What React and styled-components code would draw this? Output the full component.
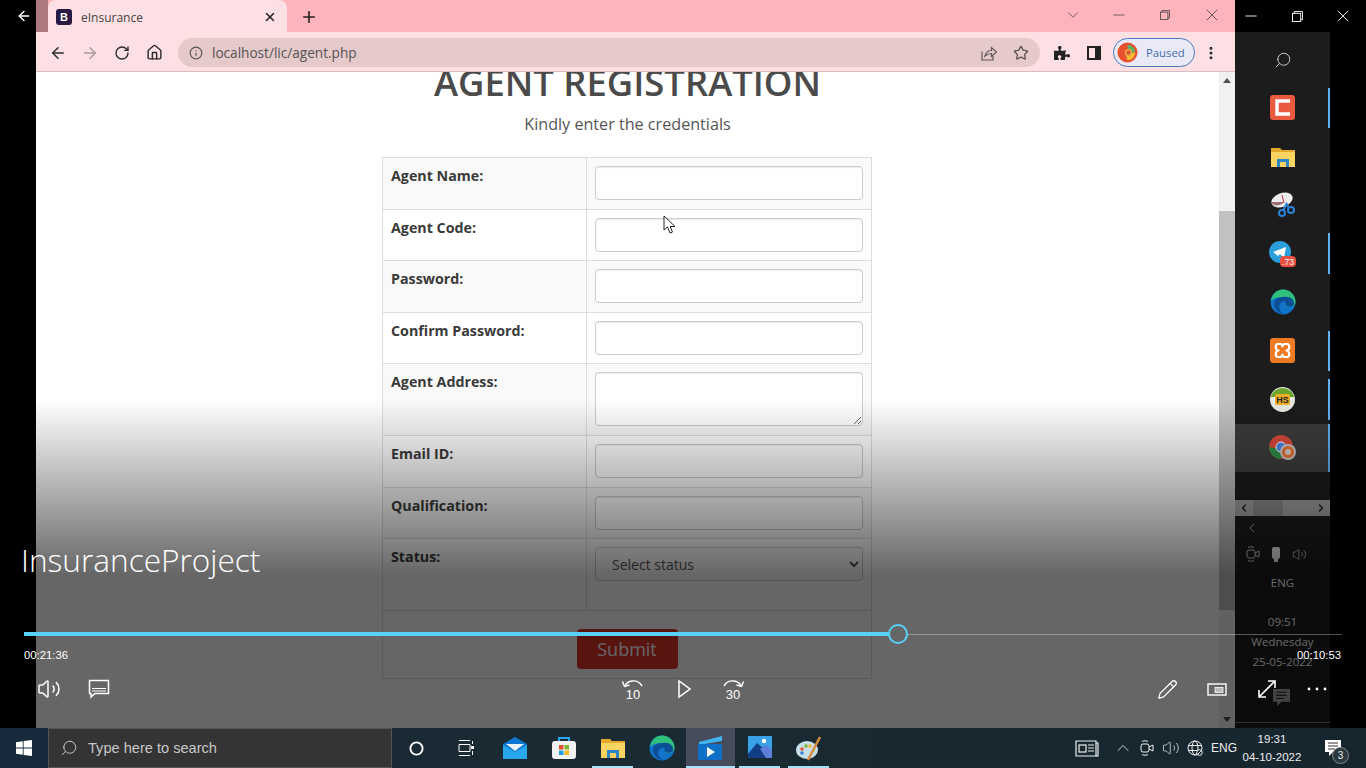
import React from 'react';
import styled, { createGlobalStyle } from 'styled-components';
import { ArrowLeft, ArrowRight, RotateCw, Home, Info, Star, ChevronDown, ChevronUp, ChevronLeft, ChevronRight, Minus, X, Plus, Search, Volume2, Pencil, MoreVertical } from 'lucide-react';
import { FaPuzzlePiece } from 'react-icons/fa';

const GlobalStyle = createGlobalStyle`
  html, body { margin: 0; padding: 0; background: #000; }
  * { box-sizing: border-box; }
  body { font-family: "Open Sans", "Liberation Sans", sans-serif; overflow: hidden; }
`;

const Desktop = styled.div`
  position: relative;
  width: 1366px;
  height: 768px;
  display: flex;
  flex-direction: column;
  overflow: hidden;
  background: #000;
`;

const Stage = styled.div`
  flex: 1;
  display: flex;
  min-height: 0;
`;

const LeftGutter = styled.div`
  width: 36px;
  background: #000;
  color: #fff;
  padding: 7px 0 0 16px;
`;

const Browser = styled.div`
  width: 1199px;
  display: flex;
  flex-direction: column;
`;

const TabStrip = styled.div`
  height: 32px;
  display: flex;
  align-items: flex-end;
  background: #ffb3ba;
  color: #333;
`;

const TabEdge = styled.div`
  width: 12px;
  height: 32px;
  background: #ad7a80;
`;

const Tab = styled.div`
  width: 239px;
  height: 32px;
  display: flex;
  align-items: center;
  padding: 2px 10px 0 8px;
  background: #fde0e3;
  border-radius: 8px 8px 0 0;
  font-size: 12px;
  color: #444;
`;

const Favicon = styled.div`
  width: 16px;
  height: 16px;
  border-radius: 3px;
  background: #2a1845;
  color: #fff;
  font: bold 11px/16px "Liberation Sans", sans-serif;
  text-align: center;
  margin-right: 9px;
`;

const TabTitle = styled.span`
  flex: 1;
`;

const NewTab = styled.div`
  width: 44px;
  height: 32px;
  padding-top: 2px;
  display: flex;
  align-items: center;
  justify-content: center;
  color: #222;
`;

const WindowControls = styled.div`
  margin-left: auto;
  display: flex;
  height: 30px;
  align-self: flex-start;
  align-items: center;
  color: #444;
`;

const WindowButton = styled.div`
  width: 46.4px;
  flex-shrink: 0;
  display: flex;
  justify-content: center;
  align-items: center;
`;

const Toolbar = styled.div`
  height: 40px;
  display: flex;
  align-items: center;
  background: #fde0e3;
  border-bottom: 1px solid #dcbcbf;
  padding: 2px 0 0 6px;
`;

const NavButton = styled.div`
  width: 32px;
  height: 32px;
  flex-shrink: 0;
  display: flex;
  align-items: center;
  justify-content: center;
  color: ${p => (p.$disabled ? '#a99a9c' : '#2b2b2b')};
`;

const Omnibox = styled.div`
  width: 862px;
  height: 29px;
  margin-left: 8px;
  margin-right: 6px;
  border-radius: 15px;
  background: #e6c9cb;
  display: flex;
  align-items: center;
  padding: 0 3px 0 11px;
  color: #555;
  font-size: 13.6px;
`;

const Url = styled.span`
  flex: 1;
  margin-left: 9px;
  color: #555;
`;

const OmniIcon = styled.div`
  width: 32px;
  display: flex;
  justify-content: center;
  color: #5d5556;
`;

const ProfileChip = styled.div`
  width: 82px;
  height: 29px;
  flex-shrink: 0;
  margin-left: 3px;
  border: 1.5px solid #4a78c0;
  border-radius: 15px;
  background: #e9eaf5;
  display: flex;
  align-items: center;
  padding-left: 3px;
  gap: 8px;
  font-size: 11.3px;
  color: #3f6cae;
`;

const BrowserBody = styled.div`
  flex: 1;
  display: flex;
  min-height: 0;
  background: #fff;
`;

const Viewport = styled.div`
  position: relative;
  flex: 1;
  overflow: hidden;
  display: flex;
  flex-direction: column;
  align-items: center;
`;

const Heading = styled.h1`
  margin: -10px 0 0;
  font-size: 36.4px;
  line-height: 40px;
  font-weight: 600;
  color: #4a4a4a;
  white-space: nowrap;
`;

const Subheading = styled.p`
  margin: 10px 0 21px;
  font-size: 16.15px;
  line-height: 24px;
  color: #555;
`;

const FormTable = styled.table`
  width: 489px;
  margin-right: 1px;
  border-collapse: collapse;
  border: 1px solid #ddd;
  table-layout: fixed;
`;

const Row = styled.tr`
  background: ${p => (p.$striped ? '#f9f9f9' : '#fff')};
`;

const LabelCell = styled.th`
  padding: 8px;
  border: 1px solid #ddd;
  text-align: left;
  vertical-align: top;
  font-size: 14.25px;
  line-height: 20px;
  font-weight: 700;
  color: #3a3a3a;
`;

const FieldCell = styled.td`
  padding: 8px;
  border: 1px solid #ddd;
  vertical-align: top;
  height: ${p => p.$height};
`;

const SubmitCell = styled.td`
  height: 68px;
  padding: 18px 0 0;
  border: 1px solid #ddd;
  text-align: center;
  vertical-align: top;
`;

const TextInput = styled.input`
  display: block;
  width: 268px;
  height: 34px;
  padding: 6px 12px;
  border: 1px solid #ccc;
  border-radius: 4px;
  background: #fff;
  box-shadow: inset 0 1px 1px rgba(0, 0, 0, 0.075);
`;

const TextArea = styled.textarea`
  display: block;
  width: 268px;
  height: 54px;
  padding: 6px 12px;
  border: 1px solid #ccc;
  border-radius: 4px;
  background: #fff;
  box-shadow: inset 0 1px 1px rgba(0, 0, 0, 0.075);
`;

const StatusSelect = styled.select`
  display: block;
  width: 268px;
  height: 34px;
  padding: 6px 12px;
  border: 1px solid #ccc;
  border-radius: 4px;
  background: #fff;
  color: #555;
  font-family: "Open Sans", sans-serif;
  font-size: 14px;
`;

const SubmitButton = styled.button`
  width: 101px;
  height: 40px;
  border: none;
  border-radius: 4px;
  background: #dc3226;
  color: #fff;
  font-family: "Open Sans", sans-serif;
  font-size: 18px;
`;

const MouseCursor = styled.svg`
  position: absolute;
  left: 627px;
  top: 143px;
`;

const Scrollbar = styled.div`
  width: 16px;
  background: #f1f1f1;
  display: flex;
  flex-direction: column;
  align-items: stretch;
`;

const ScrollArrow = styled.div`
  height: 17px;
  display: flex;
  align-items: center;
  justify-content: center;
`;

const ScrollSpacer = styled.div`
  height: ${p => p.$height || 'auto'};
  flex: ${p => (p.$height ? 'none' : 1)};
`;

const ScrollThumb = styled.div`
  height: 399px;
  background: #c1c1c1;
`;

const RightColumn = styled.div`
  width: 131px;
  display: flex;
  flex-direction: column;
`;

const BlackBar = styled.div`
  height: 32px;
  display: flex;
  justify-content: flex-end;
  align-items: center;
  color: #fff;
  background: #000;
`;

const BlackButton = styled.div`
  width: 46px;
  flex-shrink: 0;
  display: flex;
  justify-content: center;
`;

const Dock = styled.div`
  position: relative;
  width: 95px;
  flex: 1;
  background: #1c1c1c;
  display: flex;
  flex-direction: column;
  align-items: stretch;
  color: #aaa;
`;

const DockSearch = styled.div`
  height: 51.7px;
  padding-top: 4px;
  display: flex;
  align-items: center;
  justify-content: center;
  color: #ccc;
`;

const DockItem = styled.div`
  position: relative;
  height: 48.6px;
  display: flex;
  align-items: center;
  justify-content: center;
  background: ${p => (p.$active ? '#3c3c3c' : 'transparent')};
  ${p => p.$running && `
    &::after {
      content: "";
      position: absolute;
      right: 0;
      top: ${p.$active ? 0 : '4px'};
      bottom: ${p.$active ? 0 : '4px'};
      width: 2px;
      background: #5eb2f5;
    }
  `}
`;

const DockScroll = styled.div`
  height: 16px;
  margin-top: 28px;
  display: flex;
  justify-content: space-between;
  align-items: center;
  background: #a4a4a4;
  color: #222;
  padding: 0 3px;
`;

const DockThumb = styled.div`
  width: 30px;
  height: 16px;
  margin-right: 30px;
  background: #8e8e8e;
`;

const DockInfo = styled.div`
  display: flex;
  flex-direction: column;
  align-items: center;
  font-size: 11.5px;
  color: #fff;
  padding-top: 4px;
`;

const DockBack = styled.div`
  align-self: flex-start;
  margin-left: 9px;
  height: 18px;
  color: #eee;
`;

const DockIcons = styled.div`
  display: flex;
  align-self: flex-start;
  margin: 5px 0 0 11px;
  gap: 11px;
  align-items: center;
  height: 22px;
`;

const DockLine = styled.div`
  margin-top: ${p => p.$top || 0};
  line-height: 18px;
`;

const DockComment = styled.div`
  position: absolute;
  left: 38px;
  top: 657px;
  opacity: 0.6;
`;

const DockRule = styled.div`
  position: absolute;
  left: 0;
  right: 0;
  top: 690px;
  height: 1px;
  background: #777;
`;

const Player = styled.div`
  position: absolute;
  left: 0;
  right: 0;
  top: 0;
  bottom: 40px;
  display: flex;
  flex-direction: column;
  justify-content: flex-end;
  background: linear-gradient(
    to bottom,
    rgba(0, 0, 0, 0) 400px,
    rgba(0, 0, 0, 0.6) 575px
  );
  color: #fff;
`;

const VideoTitle = styled.div`
  margin: 0 0 43px 21px;
  font-size: 31.6px;
  line-height: 44px;
  font-weight: 300;
  font-family: "Open Sans", "Noto Sans", sans-serif;
`;

const Progress = styled.div`
  position: relative;
  height: 18px;
  margin: 0 24px;
  display: flex;
  align-items: center;
`;

const ProgressFill = styled.div`
  height: 4px;
  background: #5bd0f8;
`;

const ProgressRest = styled.div`
  flex: 1;
  height: 1px;
  background: rgba(255, 255, 255, 0.32);
`;

const ProgressThumb = styled.div`
  width: 20px;
  height: 20px;
  margin: 0 -1px 0 -10px;
  border: 2px solid #5bd0f8;
  border-radius: 50%;
  background: #666;
  position: relative;
`;

const TimeRow = styled.div`
  height: 21px;
  display: flex;
  justify-content: space-between;
  align-items: center;
  padding: 2px 25px 0 24px;
  font-family: "Liberation Sans", sans-serif;
  font-size: 11.3px;
`;

const ControlRow = styled.div`
  display: grid;
  grid-template-columns: 1fr auto 1fr;
  padding: 0 24px 14px;
`;

const ControlGroup = styled.div`
  display: flex;
  justify-content: ${p => p.$justify || 'flex-start'};
`;

const ControlButton = styled.div`
  width: 50px;
  height: 50px;
  display: flex;
  align-items: center;
  justify-content: center;
  color: #fff;
`;

const Taskbar = styled.div`
  height: 40px;
  display: flex;
  align-items: center;
  background: linear-gradient(90deg, #16283a 0%, #1a2b33 40%, #16262f 100%);
  color: #fff;
  position: relative;
`;

const StartButton = styled.div`
  width: 48px;
  height: 40px;
  display: flex;
  align-items: center;
  justify-content: center;
`;

const SearchBox = styled.div`
  width: 344px;
  height: 40px;
  display: flex;
  align-items: center;
  gap: 10px;
  padding-left: 11px;
  background: #343434;
  border: 1px solid #555;
  color: #c8c8c8;
  font-family: "Liberation Sans", "Open Sans", sans-serif;
  font-size: 14.6px;
`;

const TaskSlot = styled.div`
  position: relative;
  width: 49px;
  height: 40px;
  display: flex;
  align-items: center;
  justify-content: center;
  background: ${p => (p.$active ? '#474c5c' : 'transparent')};
  ${p => p.$running && `
    &::after {
      content: "";
      position: absolute;
      left: ${p.$active ? 0 : '4px'};
      right: ${p.$active ? 0 : '4px'};
      bottom: 0;
      height: 2px;
      background: #a5e1f8;
    }
  `}
`;

const Tray = styled.div`
  margin-left: auto;
  display: flex;
  align-items: center;
  height: 40px;
  padding-right: 9px;
  color: #eee;
`;

const TrayIcon = styled.div`
  width: ${p => p.$width || '24px'};
  display: flex;
  justify-content: center;
`;

const TrayText = styled.div`
  font-family: "Liberation Sans", sans-serif;
  font-size: 12px;
  width: 26px;
  margin-left: 4px;
  text-align: center;
`;

const Clock = styled.div`
  width: 70px;
  text-align: center;
  font-family: "Liberation Sans", sans-serif;
  font-size: 11.5px;
  line-height: 18px;
`;

const NotifyWrap = styled.div`
  position: relative;
  width: 48px;
  margin-left: 2px;
  height: 40px;
  display: flex;
  align-items: center;
  justify-content: center;
`;

const NotifyBadge = styled.div`
  position: absolute;
  left: 23px;
  top: 19px;
  width: 17px;
  height: 17px;
  border-radius: 50%;
  border: 1px solid #888;
  background: #2a3840;
  font-size: 10px;
  line-height: 15px;
  text-align: center;
  font-family: "Liberation Sans", sans-serif;
`;

const MirroredSearch = styled(Search)`
  transform: scaleX(-1);
`;

/* drawn icons */
const RestoreIcon = ({ size = 12, color = 'currentColor' }) => (
  <svg width={size} height={size} viewBox="0 0 12 12" fill="none" stroke={color} strokeWidth="1">
    <rect x="0.5" y="2.5" width="9" height="9" />
    <path d="M2.5 2.5V0.5H11.5V9.5H9.5" />
  </svg>
);

const ShareIcon = () => (
  <svg width="16" height="16" viewBox="0 0 16 16" fill="none" stroke="currentColor" strokeWidth="1.2">
    <path d="M1 6.5V15H12V11" />
    <path d="M4 11C5 7 8 5.5 10.5 5.5V2.5L15.5 7L10.5 11.5V8.5C8 8.5 6 9.3 4 11Z" />
  </svg>
);

const SidePanelIcon = () => (
  <svg width="14" height="14" viewBox="0 0 14 14">
    <rect x="1" y="1" width="12" height="12" fill="#fde0e3" stroke="#222" strokeWidth="2" />
    <rect x="8" y="1" width="5" height="12" fill="#222" />
  </svg>
);

const ChromeBall = ({ size = 21 }) => (
  <svg width={size} height={size} viewBox="0 0 22 22">
    <circle cx="11" cy="11" r="10.5" fill="#e8502e" />
    <path d="M11 3A8 8 0 0 1 19 11H12Z" fill="#58b368" />
    <path d="M19 11A8 8 0 0 1 11 19L9 13Z" fill="#f5c02e" />
    <circle cx="12" cy="11" r="4" fill="#e9a13a" />
    <circle cx="12" cy="11" r="2" fill="#d94a3a" />
  </svg>
);

const EdgeIcon = ({ size = 26 }) => (
  <svg width={size} height={size} viewBox="0 0 26 26">
    <circle cx="13" cy="13" r="12.5" fill="#1173c9" />
    <path d="M1 12C2 5 7 .5 13 .5C20 .5 25.5 6 25.5 13C25.5 16 23 18 20 18C17 18 15.5 17 15 15.5C18 15 18.5 12 16 10C12 7 4 8 1 12Z" fill="#2fc07c" />
    <path d="M13 8C8 8 4 11 4 15C4 20 9 25 14 25C8 22 8 15 12 13C15 11.5 17 13 15 15.5C17 18 21 19 24 16C25 10 20 7 13 8Z" fill="#0c4f97" />
  </svg>
);

const FolderIcon = ({ size = 26 }) => (
  <svg width={size} height={size} viewBox="0 0 26 24">
    <path d="M1 3H10L12 5H25V21H1Z" fill="#e3a92c" />
    <rect x="1" y="7" width="24" height="15" fill="#fbd461" />
    <rect x="7" y="14" width="12" height="8" fill="#2b86c9" />
    <rect x="10" y="17" width="6" height="5" fill="#fbd461" />
  </svg>
);

const CamtasiaIcon = () => (
  <svg width="25" height="25" viewBox="0 0 25 25">
    <rect width="25" height="25" rx="3" fill="#ea5a3e" />
    <path d="M20 6H7V19H20" fill="none" stroke="#fff" strokeWidth="3.5" />
  </svg>
);

const SnipIcon = () => (
  <svg width="26" height="28" viewBox="0 0 26 28" fill="none">
    <ellipse cx="12" cy="9" rx="11" ry="7" fill="#eee" transform="rotate(-20 12 9)" />
    <path d="M1 11C3 16 11 15 14 11" fill="#996c6f" />
    <path d="M12 4L14 12" stroke="#b34" strokeWidth="1" />
    <circle cx="12" cy="22" r="3" stroke="#2b83d8" strokeWidth="2" />
    <circle cx="21" cy="19" r="3" stroke="#2b83d8" strokeWidth="2" />
    <path d="M13 20L17 12M19 17L16 12" stroke="#2b83d8" strokeWidth="2" />
  </svg>
);

const TelegramIcon = () => (
  <svg width="28" height="26" viewBox="0 0 28 26">
    <circle cx="11" cy="11" r="11" fill="#2a9fdc" />
    <path d="M4 11L17 6L15 17L11 13L9 15Z" fill="#fff" />
    <rect x="11" y="15" width="16" height="11" rx="4" fill="#e8503f" />
    <text x="19" y="24" fill="#fff" fontSize="8.5" textAnchor="middle" fontFamily="Liberation Sans">.73</text>
  </svg>
);

const XamppIcon = () => (
  <svg width="25" height="25" viewBox="0 0 25 25">
    <rect width="25" height="25" rx="3" fill="#ee7b23" />
    <path d="M8 6H11L12.5 8L14 6H17C20 6 20 11 17 12.5C20 14 20 19 17 19H14L12.5 17L11 19H8C5 19 5 14 8 12.5C5 11 5 6 8 6Z" fill="none" stroke="#fff" strokeWidth="2.2" />
  </svg>
);

const HsIcon = () => (
  <svg width="25" height="25" viewBox="0 0 25 25">
    <circle cx="12.5" cy="12.5" r="12.5" fill="#e8e8e2" />
    <path d="M.5 10A12.5 12.5 0 0 1 24.5 10Z" fill="#6aa62e" />
    <rect x="5" y="7" width="15" height="11" rx="2" fill="#f1ae24" />
    <text x="12.5" y="16" fontSize="9" fontWeight="700" textAnchor="middle" fontFamily="Liberation Sans" fill="#222">HS</text>
  </svg>
);

const ChromeOverlapIcon = () => (
  <svg width="28" height="26" viewBox="0 0 28 26">
    <circle cx="12" cy="12" r="12" fill="#d94a3a" />
    <path d="M0 12A12 12 0 0 0 12 24L15 15Z" fill="#2f8f4a" />
    <circle cx="12" cy="12" r="5" fill="#4a86e8" stroke="#fff" strokeWidth="1" />
    <circle cx="19" cy="17" r="8" fill="#c8c8c8" />
    <circle cx="19" cy="17" r="6" fill="#e8702e" />
    <circle cx="19" cy="17" r="3" fill="#d5d0c8" />
  </svg>
);

const MailIcon = () => (
  <svg width="24" height="24" viewBox="0 0 24 24">
    <path d="M0 8L12 1L24 8V23H0Z" fill="#0f78d4" />
    <path d="M3 8H21L12 15Z" fill="#e8f3fb" />
    <path d="M0 9L12 16L24 9V23H0Z" fill="#27a6ec" />
  </svg>
);

const StoreIcon = () => (
  <svg width="24" height="24" viewBox="0 0 24 24">
    <path d="M7 5V2H17V5" fill="none" stroke="#2aa3e8" strokeWidth="2" />
    <rect y="5" width="24" height="18" rx="3" fill="#f2f2f2" />
    <rect x="7" y="9" width="4.5" height="4.5" fill="#e8502e" />
    <rect x="12.5" y="9" width="4.5" height="4.5" fill="#7fb62d" />
    <rect x="7" y="14.5" width="4.5" height="4.5" fill="#1f9be0" />
    <rect x="12.5" y="14.5" width="4.5" height="4.5" fill="#f5b921" />
  </svg>
);

const MoviesIcon = () => (
  <svg width="25" height="24" viewBox="0 0 25 24">
    <path d="M1 6L24 0V5L1 9Z" fill="#41b4ee" />
    <rect x="0" y="8" width="24" height="16" rx="2" fill="#0f6fc4" />
    <path d="M9 11L17 16L9 21Z" fill="#fff" />
  </svg>
);

const PhotosIcon = () => (
  <svg width="24" height="24" viewBox="0 0 24 24">
    <rect width="24" height="22" fill="#3aa0e8" />
    <circle cx="16" cy="5" r="2.2" fill="#fff" />
    <path d="M0 18L9 7L24 20V22H0Z" fill="#123f84" />
    <path d="M12 13L18 9L24 14V22H18Z" fill="#5b7fdb" />
  </svg>
);

const PaintIcon = () => (
  <svg width="26" height="26" viewBox="0 0 26 26">
    <ellipse cx="11" cy="15" rx="11" ry="9" fill="#c6dfe8" />
    <circle cx="6" cy="14" r="1.7" fill="#e8502e" />
    <circle cx="10" cy="11" r="1.7" fill="#7fb62d" />
    <circle cx="14" cy="11" r="1.7" fill="#f5b921" />
    <circle cx="6" cy="18" r="1.7" fill="#2a7de1" />
    <path d="M12 25L24 2" stroke="#d88b3d" strokeWidth="2.5" />
  </svg>
);

const WindowsLogo = () => (
  <svg width="16" height="16" viewBox="0 0 16 16" fill="#fff">
    <path d="M0 2.3L6.8 1.2V7.6H0ZM7.6 1.1L16 0V7.6H7.6ZM0 8.4H6.8V14.8L0 13.7ZM7.6 8.4H16V16L7.6 14.9Z" />
  </svg>
);

const CaptionIcon = () => (
  <svg width="22" height="20" viewBox="0 0 22 20" fill="none" stroke="#fff" strokeWidth="1.5">
    <path d="M1.5 1.5H20.5V14.5H7L3 18V14.5H1.5Z" />
    <path d="M4 9.5H18M4 12H18" strokeWidth="1" />
  </svg>
);

const RewindIcon = ({ label, flip }) => (
  <svg width="24" height="24" viewBox="0 0 24 24" fill="none" stroke="#fff" strokeWidth="1.4">
    <g transform={flip ? 'translate(24 0) scale(-1 1)' : undefined}>
      <path d="M4 9C6 3 16 2 20 7.5L21 9" />
      <path d="M1.5 4.5L3.5 9.5L8.5 8" />
    </g>
    <text x="12" y="22" fill="#fff" stroke="none" fontSize="13" textAnchor="middle" fontFamily="Liberation Sans">{label}</text>
  </svg>
);

const PlayIcon = () => (
  <svg width="16" height="20" viewBox="0 0 16 20" fill="none" stroke="#fff" strokeWidth="1.5">
    <path d="M4 2V18L15 10Z" />
  </svg>
);

const PipIcon = () => (
  <svg width="20" height="13" viewBox="0 0 20 13" fill="none" stroke="#fff" strokeWidth="1.4">
    <rect x="1" y="1" width="18" height="11" />
    <rect x="8" y="4.5" width="8" height="5" fill="#bbb" strokeWidth="0.8" />
  </svg>
);

const ExpandIcon = () => (
  <svg width="20" height="20" viewBox="0 0 20 20" fill="none" stroke="#fff" strokeWidth="1.6">
    <path d="M2 18L18 2M11 2H18V9M2 11V18H9" />
  </svg>
);

const Dots = () => (
  <svg width="20" height="4" viewBox="0 0 20 4" fill="#fff">
    <circle cx="2" cy="2" r="1.4" />
    <circle cx="10" cy="2" r="1.4" />
    <circle cx="18" cy="2" r="1.4" />
  </svg>
);

const MeetIcon = ({ color = '#eee' }) => (
  <svg width="14" height="16" viewBox="0 0 14 16" fill="none" stroke={color} strokeWidth="1">
    <rect x="1" y="4" width="8" height="8" rx="2" />
    <path d="M9 7L13 5V11L9 9" />
    <path d="M2 1.5C4 .5 6 .5 8 1.5M2 14.5C4 15.5 6 15.5 8 14.5" />
  </svg>
);

const NewsIcon = () => (
  <svg width="24" height="17" viewBox="0 0 24 17" fill="none" stroke="#eee" strokeWidth="1.2">
    <path d="M1 1H21V16H1Z" />
    <path d="M21 3H23V16H21" />
    <rect x="4" y="5" width="7" height="7" />
    <path d="M13 5H19M13 8H19M13 11H19" />
  </svg>
);

const GlobeIcon = () => (
  <svg width="16" height="16" viewBox="0 0 16 16" fill="none" stroke="#eee" strokeWidth="1">
    <circle cx="8" cy="8" r="7" />
    <ellipse cx="8" cy="8" rx="3" ry="7" />
    <path d="M1 5.5H15M1 10.5H15" />
    <circle cx="12.5" cy="12.5" r="2.8" fill="#1a2b33" />
    <path d="M10.7 14.3L14.3 10.7" />
  </svg>
);

const SpeechIcon = ({ color = '#fff', size = 16 }) => (
  <svg width={size} height={size} viewBox="0 0 16 16" fill={color}>
    <path d="M0 0H16V12H8L4 16V12H0Z" />
    <path d="M3 3H13M3 6H13M3 9H10" stroke="#333" strokeWidth="1" />
  </svg>
);

const CursorIcon = () => (
  <MouseCursor width="14" height="20" viewBox="0 0 14 20">
    <path d="M1 1V15L4.5 12L7 18L9.5 17L7 11.5H12Z" fill="#fff" stroke="#222" strokeWidth="1" />
  </MouseCursor>
);

// row heights alternate 52/51 in the reference
const fields = [
  { label: 'Agent Name:', height: '52px', striped: true, control: <TextInput /> },
  { label: 'Agent Code:', height: '51px', control: <TextInput /> },
  { label: 'Password:', height: '52px', striped: true, control: <TextInput /> },
  { label: 'Confirm Password:', height: '51px', control: <TextInput /> },
  { label: 'Agent Address:', height: '72px', striped: true, control: <TextArea /> },
  { label: 'Email ID:', height: '52px', control: <TextInput /> },
  { label: 'Qualification:', height: '51px', striped: true, control: <TextInput /> },
  {
    label: 'Status:',
    height: '72px',
    control: (
      <StatusSelect defaultValue="">
        <option value="">Select status</option>
      </StatusSelect>
    ),
  },
];

const dockApps = [
  { icon: <CamtasiaIcon />, running: true },
  { icon: <FolderIcon /> },
  { icon: <SnipIcon /> },
  { icon: <TelegramIcon />, running: true },
  { icon: <EdgeIcon /> },
  { icon: <XamppIcon />, running: true },
  { icon: <HsIcon />, running: true },
  { icon: <ChromeOverlapIcon />, running: true, active: true },
];

const taskApps = [
  { icon: <MailIcon /> },
  { icon: <StoreIcon /> },
  { icon: <FolderIcon />, running: true },
  { icon: <EdgeIcon /> },
  { icon: <MoviesIcon />, running: true, active: true },
  { icon: <PhotosIcon />, running: true },
  { icon: <PaintIcon />, running: true },
];

const progress = (874 / 1318) * 100;

const App = () => (
  <Desktop>
    <GlobalStyle />
    <Stage>
      <LeftGutter>
        <ArrowLeft size={16} strokeWidth={2} />
      </LeftGutter>
      <Browser>
        <TabStrip>
          <TabEdge />
          <Tab>
            <Favicon>B</Favicon>
            <TabTitle>eInsurance</TabTitle>
            <X size={14} strokeWidth={2.5} color="#222" />
          </Tab>
          <NewTab>
            <Plus size={18} strokeWidth={2.2} />
          </NewTab>
          <WindowControls>
            <WindowButton><ChevronDown size={18} strokeWidth={1} /></WindowButton>
            <WindowButton><Minus size={18} strokeWidth={1} /></WindowButton>
            <WindowButton><RestoreIcon size={10} /></WindowButton>
            <WindowButton><X size={20} strokeWidth={1} /></WindowButton>
          </WindowControls>
        </TabStrip>
        <Toolbar>
          <NavButton><ArrowLeft size={18} /></NavButton>
          <NavButton $disabled><ArrowRight size={18} /></NavButton>
          <NavButton><RotateCw size={16} /></NavButton>
          <NavButton><Home size={17} /></NavButton>
          <Omnibox>
            <Info size={14} />
            <Url>localhost/lic/agent.php</Url>
            <OmniIcon><ShareIcon /></OmniIcon>
            <OmniIcon><Star size={16} /></OmniIcon>
          </Omnibox>
          <NavButton><FaPuzzlePiece size={16} color="#222" /></NavButton>
          <NavButton><SidePanelIcon /></NavButton>
          <ProfileChip>
            <ChromeBall />
            Paused
          </ProfileChip>
          <NavButton><MoreVertical size={16} strokeWidth={2.5} /></NavButton>
        </Toolbar>
        <BrowserBody>
          <Viewport>
            <Heading>AGENT REGISTRATION</Heading>
            <Subheading>Kindly enter the credentials</Subheading>
            <FormTable>
              <colgroup>
                <col width="204" />
                <col width="285" />
              </colgroup>
              <tbody>
                {fields.map(f => (
                  <Row key={f.label} $striped={f.striped}>
                    <LabelCell>{f.label}</LabelCell>
                    <FieldCell $height={f.height}>{f.control}</FieldCell>
                  </Row>
                ))}
                <Row>
                  <SubmitCell colSpan="2">
                    <SubmitButton>Submit</SubmitButton>
                  </SubmitCell>
                </Row>
              </tbody>
            </FormTable>
            <CursorIcon />
          </Viewport>
          <Scrollbar>
            <ScrollArrow>
              <svg width="8" height="5" viewBox="0 0 8 5"><path d="M4 0L8 5H0Z" fill="#505050" /></svg>
            </ScrollArrow>
            <ScrollSpacer $height="122px" />
            <ScrollThumb />
            <ScrollSpacer />
            <ScrollArrow>
              <svg width="8" height="5" viewBox="0 0 8 5"><path d="M4 5L8 0H0Z" fill="#505050" /></svg>
            </ScrollArrow>
          </Scrollbar>
        </BrowserBody>
      </Browser>
      <RightColumn>
        <BlackBar>
          <BlackButton><Minus size={18} strokeWidth={1.2} /></BlackButton>
          <BlackButton><RestoreIcon size={11} /></BlackButton>
          <BlackButton><X size={20} strokeWidth={1.1} /></BlackButton>
        </BlackBar>
        <Dock>
          <DockSearch><MirroredSearch size={18} strokeWidth={1.3} /></DockSearch>
          {dockApps.map((app, i) => (
            <DockItem key={i} $running={app.running} $active={app.active}>{app.icon}</DockItem>
          ))}
          <DockScroll>
            <ChevronLeft size={12} strokeWidth={3} />
            <DockThumb />
            <ChevronRight size={12} strokeWidth={3} />
          </DockScroll>
          <DockInfo>
            <DockBack><ChevronLeft size={16} strokeWidth={1} /></DockBack>
            <DockIcons>
              <MeetIcon color="#ccc" />
              <svg width="10" height="15" viewBox="0 0 10 15"><rect x="1" width="8" height="12" rx="2" fill="#eee" /><rect x="3" y="12" width="4" height="3" fill="#eee" /></svg>
              <Volume2 size={15} strokeWidth={1} />
            </DockIcons>
            <DockLine $top="9px">ENG</DockLine>
            <DockLine $top="21px">09:51</DockLine>
            <DockLine $top="2px">Wednesday</DockLine>
            <DockLine $top="2px">25-05-2022</DockLine>
          </DockInfo>
          <DockComment><SpeechIcon size={17} /></DockComment>
          <DockRule />
        </Dock>
      </RightColumn>
    </Stage>
    <Taskbar>
      <StartButton><WindowsLogo /></StartButton>
      <SearchBox>
        <MirroredSearch size={18} strokeWidth={1.3} />
        Type here to search
      </SearchBox>
      <TaskSlot>
        <svg width="15" height="15" viewBox="0 0 16 16" fill="none" stroke="#fff" strokeWidth="2"><circle cx="8" cy="8" r="6.5" /></svg>
      </TaskSlot>
      <TaskSlot>
        <svg width="16" height="16" viewBox="0 0 16 16" fill="none" stroke="#fff" strokeWidth="1"><path d="M1 .5H12M1 15.5H12M1 4.5H12V11.5H1Z" /><rect x="13" y="6" width="3" height="3" fill="#fff" stroke="none" /><path d="M14.5 1V4M14.5 11V15" /></svg>
      </TaskSlot>
      {taskApps.map((app, i) => (
        <TaskSlot key={i} $running={app.running} $active={app.active}>{app.icon}</TaskSlot>
      ))}
      <Tray>
        <TrayIcon $width="48px"><NewsIcon /></TrayIcon>
        <TrayIcon><ChevronUp size={20} strokeWidth={1} /></TrayIcon>
        <TrayIcon><MeetIcon /></TrayIcon>
        <TrayIcon><Volume2 size={18} strokeWidth={1} /></TrayIcon>
        <TrayIcon><GlobeIcon /></TrayIcon>
        <TrayText>ENG</TrayText>
        <Clock>19:31<br />04-10-2022</Clock>
        <NotifyWrap>
          <SpeechIcon />
          <NotifyBadge>3</NotifyBadge>
        </NotifyWrap>
      </Tray>
    </Taskbar>
    <Player>
      <VideoTitle>InsuranceProject</VideoTitle>
      <Progress>
        <ProgressFill style={{ width: `${progress}%` }} />
        <ProgressThumb />
        <ProgressRest />
      </Progress>
      <TimeRow>
        <span>00:21:36</span>
        <span>00:10:53</span>
      </TimeRow>
      <ControlRow>
        <ControlGroup>
          <ControlButton><Volume2 size={24} strokeWidth={1.5} /></ControlButton>
          <ControlButton><CaptionIcon /></ControlButton>
        </ControlGroup>
        <ControlGroup>
          <ControlButton><RewindIcon label="10" /></ControlButton>
          <ControlButton><PlayIcon /></ControlButton>
          <ControlButton><RewindIcon label="30" flip /></ControlButton>
        </ControlGroup>
        <ControlGroup $justify="flex-end">
          <ControlButton><Pencil size={21} strokeWidth={1.5} /></ControlButton>
          <ControlButton><PipIcon /></ControlButton>
          <ControlButton><ExpandIcon /></ControlButton>
          <ControlButton><Dots /></ControlButton>
        </ControlGroup>
      </ControlRow>
    </Player>
  </Desktop>
);

export default App;
